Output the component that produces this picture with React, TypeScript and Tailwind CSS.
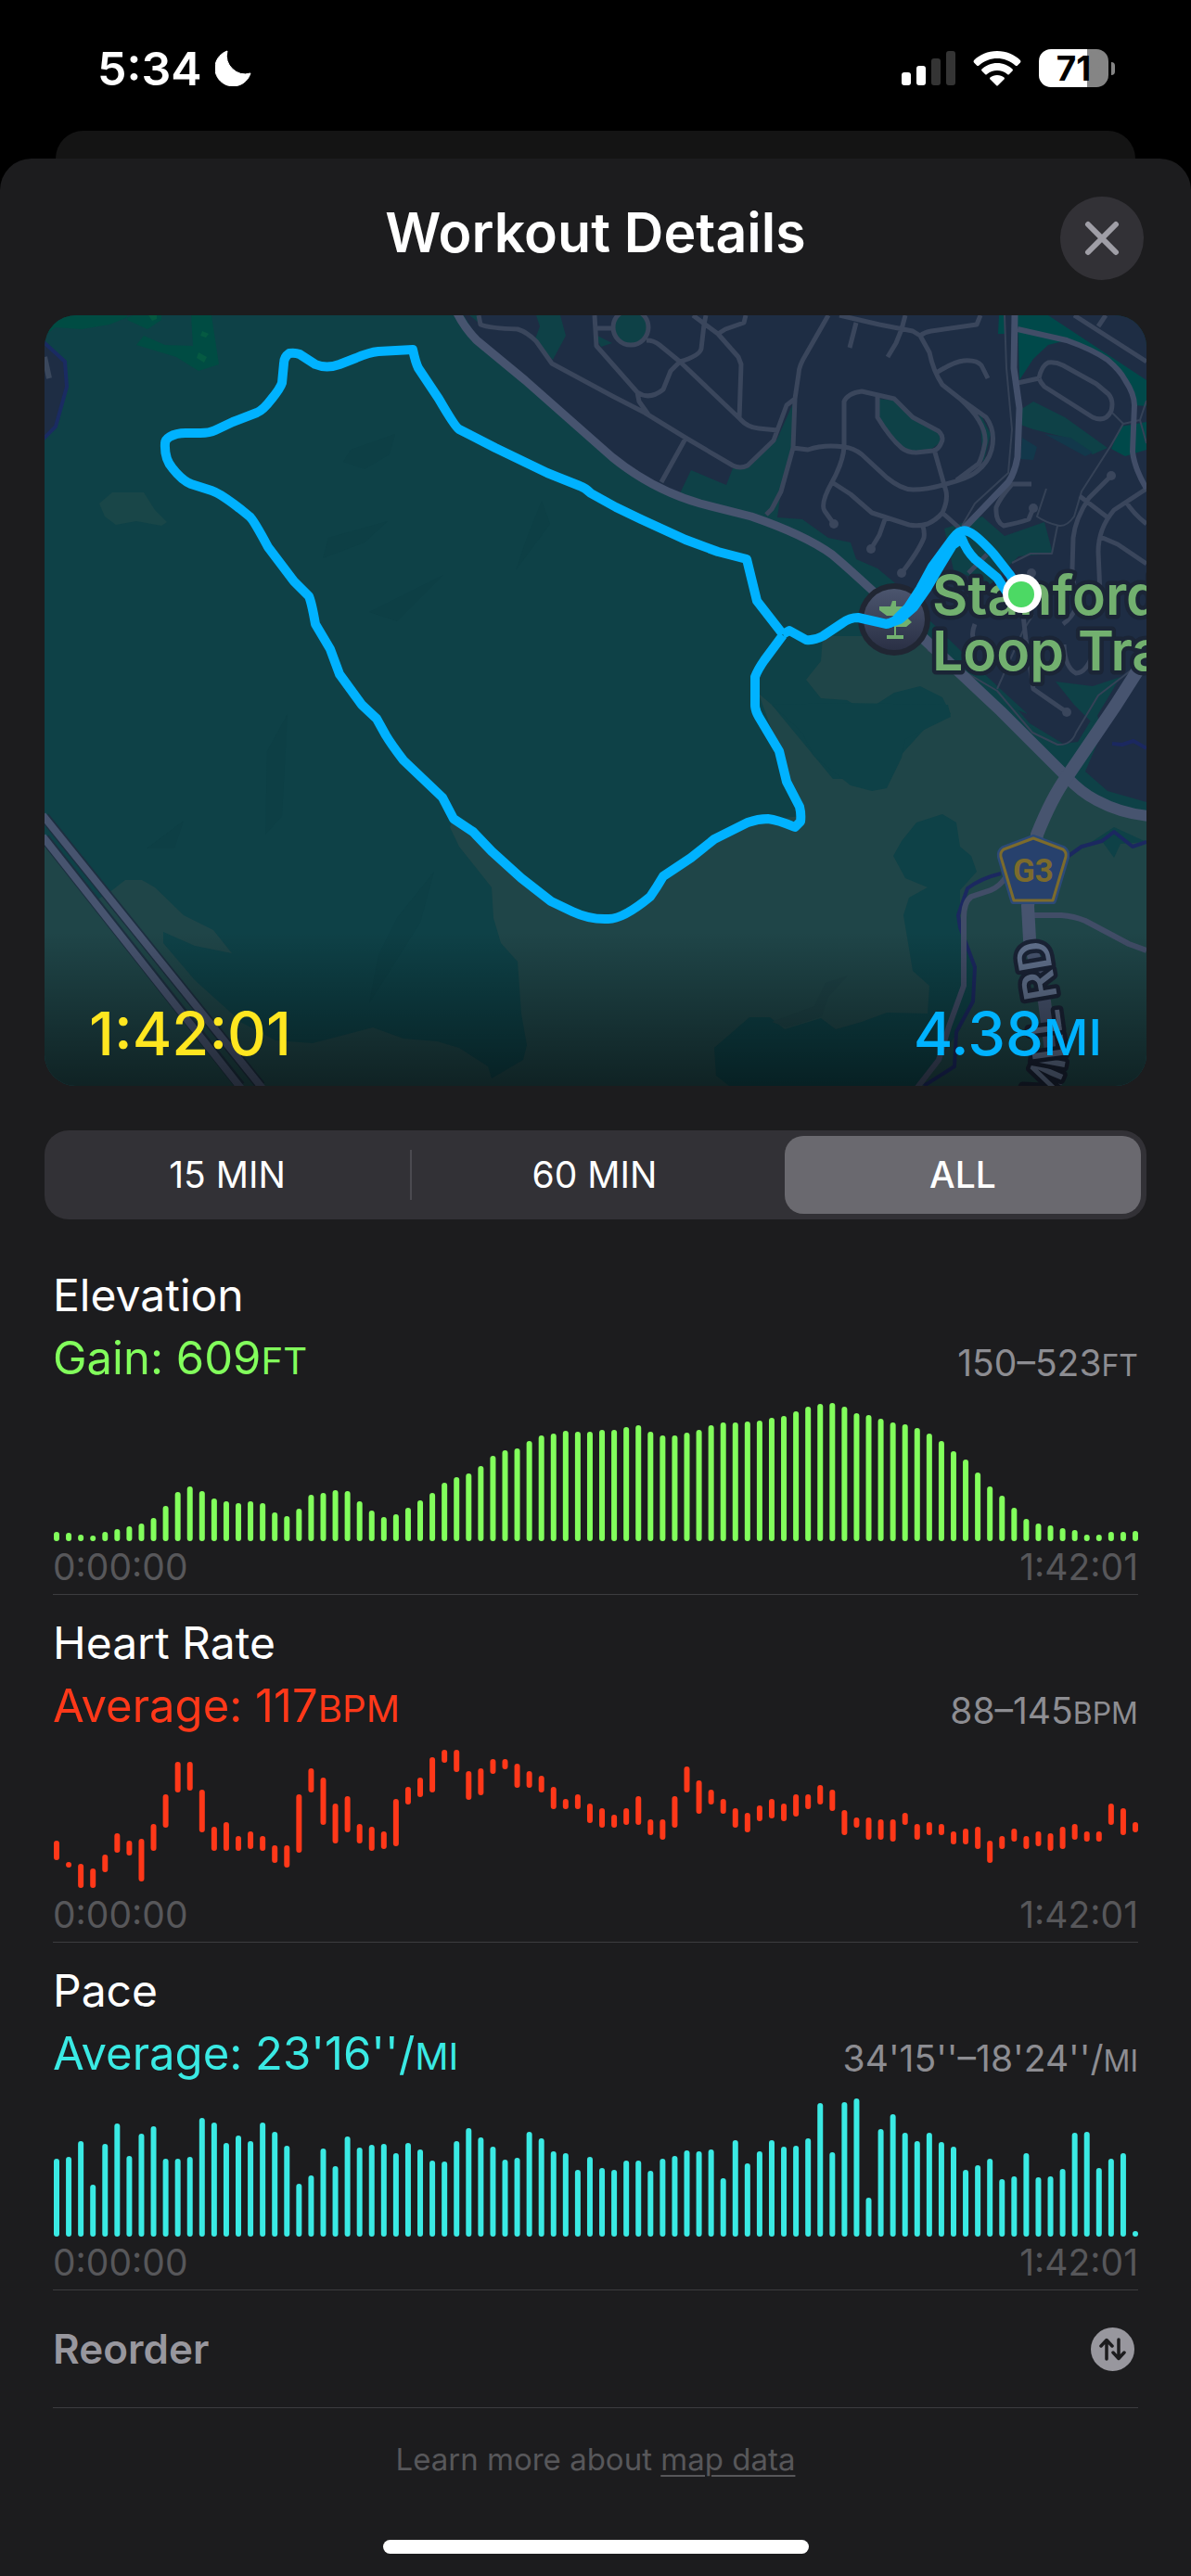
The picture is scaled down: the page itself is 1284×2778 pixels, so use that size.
import { useState } from "react";
import type { ReactNode } from "react";

type Bar = [top: number, bottom: number];

const CHART_HEIGHT = 150;

const fromBase = (heights: number[]): Bar[] =>
  heights.map((h) => [CHART_HEIGHT - h, CHART_HEIGHT]);

const ELEVATION = fromBase([
  10, 9, 7, 6, 10, 13, 16, 19, 25, 38, 53, 59, 54, 46, 43, 41, 43, 41, 31, 27,
  35, 50, 52, 55, 54, 43, 33, 26, 29, 36, 44, 52, 63, 69, 73, 81, 92, 98, 100,
  108, 114, 116, 119, 118, 118, 120, 120, 123, 125, 118, 114, 114, 117, 120,
  125, 128, 128, 129, 130, 133, 135, 140, 145, 148, 149, 145, 138, 136, 132,
  128, 126, 122, 116, 108, 97, 88, 74, 59, 49, 36, 24, 19, 17, 14, 12, 7, 7,
  10, 10, 11,
]);

const HEART_RATE: Bar[] = [
  [98, 119], [121, 127], [123, 149], [128, 149], [113, 132], [90, 111],
  [98, 114], [96, 142], [80, 109], [48, 84], [13, 46], [13, 44], [43, 89],
  [83, 109], [78, 109], [93, 109], [88, 107], [93, 109], [103, 122],
  [103, 127], [48, 111], [20, 46], [30, 81], [58, 101], [50, 89], [80, 101],
  [83, 109], [88, 107], [53, 104], [40, 59], [30, 51], [8, 46], [0, 14],
  [0, 24], [23, 54], [20, 49], [10, 26], [10, 21], [15, 41], [23, 41],
  [28, 46], [40, 64], [53, 64], [48, 64], [58, 79], [63, 84], [70, 84],
  [63, 81], [50, 81], [75, 92], [75, 97], [50, 84], [18, 46], [33, 69],
  [43, 59], [53, 69], [63, 84], [68, 89], [60, 77], [53, 74], [58, 77],
  [48, 72], [48, 64], [38, 59], [43, 66], [65, 92], [73, 84], [73, 97],
  [75, 97], [75, 99], [68, 81], [80, 97], [78, 92], [80, 92], [88, 102],
  [85, 102], [83, 107], [98, 122], [93, 107], [85, 99], [93, 107], [88, 104],
  [90, 109], [83, 107], [80, 97], [88, 99], [88, 99], [58, 81], [63, 92],
  [78, 89],
];

const PACE = fromBase([
  84, 86, 103, 56, 100, 122, 87, 111, 119, 84, 84, 86, 128, 123, 101, 109,
  103, 123, 113, 98, 57, 66, 95, 76, 108, 96, 99, 100, 90, 101, 94, 82, 81,
  103, 117, 107, 97, 83, 85, 113, 106, 92, 90, 72, 86, 74, 72, 82, 82, 71, 84,
  87, 93, 92, 94, 63, 104, 79, 92, 104, 97, 98, 106, 144, 91, 145, 149, 42,
  116, 132, 112, 103, 112, 102, 97, 72, 77, 84, 62, 65, 90, 64, 65, 73, 112,
  113, 74, 84, 90, 6,
]);

function StatusBar() {
  return (
    <div className="flex h-[141px] items-center justify-between pr-[82px] pl-[105px] pt-[6px]">
      <div className="flex items-center gap-[14px]">
        <span className="text-[50px] leading-[60px] font-semibold">5:34</span>
        <svg viewBox="0 0 39 39" className="size-[39px]" aria-label="Do not disturb">
          <path
            d="M13 1 A20 20 0 0 0 38 25 A19.500 19.500 0 1 1 13 1 Z"
            fill="#fff"
            stroke="#fff"
            strokeLinejoin="round"
          />
        </svg>
      </div>
      <div className="flex items-center gap-[19px]">
        <svg viewBox="0 0 58 38" className="h-[38px] w-[58px]" aria-label="Signal">
          <rect x="0" y="23" width="10" height="14" rx="3" fill="#fff" />
          <rect x="16" y="16" width="10" height="21" rx="3" fill="#fff" />
          <rect x="32" y="8" width="10" height="29" rx="3" fill="#343434" />
          <rect x="48" y="0" width="10" height="37" rx="3" fill="#343434" />
        </svg>
        <svg viewBox="0 0 52 38" className="h-[38px] w-[52px]" aria-label="Wi-Fi">
          <path
            d="M26 0 C36 0 45 4 51 10 Q52 11 51 12.500 L48 15.500 Q47 16.500 45.500 15.500 C40 10.500 33 8 26 8 C19 8 12 10.500 6.500 15.500 Q5 16.500 4 15.500 L1 12.500 Q0 11 1 10 C7 4 16 0 26 0 Z"
            fill="#fff"
          />
          <path
            d="M26 13 C32.500 13 38 15.500 42.500 19.500 Q43.500 20.500 42.500 21.500 L39 25 Q38 26 37 25 C34 22.500 30 21 26 21 C22 21 18 22.500 15 25 Q14 26 13 25 L9.500 21.500 Q8.500 20.500 9.500 19.500 C14 15.500 19.500 13 26 13 Z"
            fill="#fff"
          />
          <path
            d="M26 26 C29 26 31.500 27 33.500 28.500 Q34.500 29.500 33.500 30.500 L27 37 Q26 38 25 37 L18.500 30.500 Q17.500 29.500 18.500 28.500 C20.500 27 23 26 26 26 Z"
            fill="#fff"
          />
        </svg>
        <div className="flex items-center gap-[3px]">
          <div className="flex h-[41px] w-[75px] items-center justify-center rounded-[13px] bg-linear-to-r from-white from-70% to-[#858585] to-70% text-[37px] leading-[41px] font-bold text-black">
            71
          </div>
          <div className="h-[14px] w-[4px] rounded-r-full bg-[#858585]" />
        </div>
      </div>
    </div>
  );
}

const ROUTE_LOOP =
  "M796 344 L768 308 L757 263 L726 255 L691 242 L643 220 L616 207 L589 192 Q583 186 577 184 L542 170 L486 143 L447 123 Q443 121 425 90 L403 57 Q400 51 397 37 L360 39 Q350 40 336 46 L318 53 Q304 58 292 53 L275 42 Q270 40 264 41 Q258 45 258 52 L256 73 Q254 79 245 90 Q236 102 229 105 L203 115 L184 124 Q178 127 168 127 L152 127 Q142 127 135 131 Q130 134 130 138 Q129 155 138 165 Q148 178 158 182 L180 189 Q192 193 221 217 Q225 220 241 250 L269 287 L285 303 Q288 310 292 333 L308 360 L318 387 L342 420 L358 435 L368 453 Q374 463 387 480 L429 520 L441 543 L462 557 L482 578 L514 607 L546 632 L569 643 Q588 652 608 651 Q624 651 653 627 Q660 617 667 605 L697 585 L722 565 L758 547 Q769 543 780 543 Q790 544 809 552 L815 546 Q816 538 814 530 L800 503 L792 470 L770 433 Q766 426 766 420 L766 390 Q769 382 776 372 L796 345";

const ROUTE_SPUR =
  "M796 344 L803 340 L821 350 Q830 351 839 346 L860 332 Q868 326 877 326 L908 333 Q916 331 920 326 L931 315 L944 295 L957 271 L979 241 Q987 230 995 233 Q1003 235 1023 257 L1041 280 L1053 300";

const ROUTE_RETURN =
  "M908 333 L922 328 L937 315 L951 295 L965 271 L979 248 L989 241 Q994 254 1003 263 L1027 283 L1041 304";

const STREETS =
  "M468 0 L470 10 Q480 14 510 15 Q520 18 530 28 L547 52 L612 87 L647 105 L691 132 L742 162 Q750 166 758 162 L786 135 L800 97 L809 90 M593 0 L595 33 L639 83 Q652 92 667 80 L675 60 L685 50 Q706 44 708 36 L711 10 L713 0 M596 14 L612 14 M649 27 Q657 27 663 32 L685 50 L750 112 Q758 121 770 122 L790 124 M699 0 L726 20 L748 45 L751 53 L749 112 M726 20 L734 15 L754 8 L756 0 M639 83 L641 93 L651 107 M845 0 L821 42 Q813 55 813 63 L809 90 L807 143 L794 190 L784 209 L778 215 M691 133 L665 180 M807 143 L823 145 Q840 139 862 142 Q872 143 881 150 L908 175 Q924 188 936 188 Q952 188 972 182 Q995 176 1003 170 Q1017 160 1021 145 Q1026 125 1015 110 L987 90 L968 75 Q958 60 954 40 L944 22 L936 17 L900 10 L857 0 M987 90 Q1002 104 1007 113 Q1015 126 1014 137 Q1011 153 1007 160 L983 178 M875 8 L868 35 M928 0 L924 15 L918 30 L909 45 M944 22 Q949 18 956 17 L1005 10 L1009 0 M960 63 Q980 50 991 49 Q1005 48 1010 54 L1017 68 M862 142 L862 93 Q866 84 881 82 L916 90 L936 110 L964 125 Q970 131 967 137 Q964 145 958 146 L940 148 Q930 148 924 143 Q912 133 898 110 L898 88 M862 142 Q861 158 849 180 Q836 203 841 211 L851 225 M849 180 L869 193 L892 213 L932 226 Q942 228 952 225 Q961 221 968 213 Q974 200 972 190 L960 148 M906 220 L900 237 L891 252 M947 227 Q949 235 948 240 Q942 255 924 278 M968 213 L987 230 M1110 0 L1188 50 M1144 0 L1136 12 M1072 68 Q1075 54 1082 51 Q1090 50 1098 54 L1134 74 L1147 85 Q1153 92 1150 103 Q1144 116 1130 110 L1078 77 Q1074 73 1072 68 M1049 73 L1072 68 M1150 173 L1126 197 Q1111 220 1109 240 L1108 273 L1112 315 Q1108 326 1098 333 M1188 187 L1153 210 Q1136 230 1136 255 L1138 300 M1136 238 L1157 247 L1188 268 M1165 200 Q1174 214 1188 225 M1116 195 L1146 218 M1064 182 L1043 182 Q1030 197 1026 207 Q1025 223 1034 227 Q1050 224 1061 220 L1066 208 M1055 323 L1058 350 L1066 403 L1102 428 M1099 355 Q1100 380 1112 386 Q1124 386 1132 360 M1003 333 Q998 345 1003 353 M996 278 L1016 258";

const FOOTPATHS =
  "M1035 0 L1037 57 L1043 123 L1039 170 L1003 203 L989 227 M1188 92 L1181 113 L1163 117 L1150 140 L1118 190 L1110 217 Q1102 228 1094 227 Q1080 224 1070 217 L1080 187 M1151 105 L1163 117 M1181 113 L1188 138 M1092 227 L1086 257 L1063 257 L1043 267 M952 361 L1027 405 L1065 450 L1092 463 Q1107 464 1112 450 L1136 410 L1188 370 M1027 403 L1055 340 L1066 323";

function RouteMap() {
  return (
    <svg
      viewBox="0 0 1188 831"
      preserveAspectRatio="xMidYMid slice"
      className="block h-auto w-full"
      role="img"
      aria-label="Workout route map"
    >
      <defs>
        <linearGradient id="fade" x1="0" y1="0" x2="0" y2="1">
          <stop offset="0" stopColor="#000" stopOpacity="0" />
          <stop offset="1" stopColor="#000" stopOpacity="0.5" />
        </linearGradient>
        <linearGradient id="pin" x1="0" y1="0" x2="0" y2="1">
          <stop offset="0" stopColor="#4b556e" />
          <stop offset="1" stopColor="#2a3045" />
        </linearGradient>
        <path id="mill-road" d="M1040 920 Q1098 840 1101 800 L1092 735 L1081 672" />
      </defs>

      <rect width="1188" height="831" fill="#0e4147" />

      {/* Open hillsides */}
      <path
        fill="#1f4548"
        d="M839 346 L837 373 L821 393 L837 413 L865 415 L885 427 L916 407 L944 400 L968 412 L977 430 L948 447 L900 500 L850 500 L784 420 L770 408 L792 470 L814 540 L758 547 L697 585 L653 627 L608 651 L546 632 L441 543 L437 552 L447 573 L482 617 L484 650 L492 677 L510 697 L514 753 L520 787 L516 803 L482 823 L478 810 L447 790 L423 783 L387 780 L354 768 L289 785 L249 782 L213 763 L162 717 L128 677 L128 665 L162 680 L202 688 L182 663 L150 647 L119 617 L105 609 L87 609 L73 620 L57 630 L0 567 L0 831 L1188 831 L1188 540 L1134 523 L1102 498 L1023 420 L952 353 L905 346 Z"
      />
      <path
        fill="#194648"
        d="M73 191 L107 191 L119 210 L132 223 L126 227 L99 222 L77 226 L65 217 L59 203 Z"
      />
      <path
        fill="#0e4147"
        d="M784 420 L817 450 L829 475 L869 507 L892 513 L908 510 L924 477 L928 457 L948 447 L977 433 L974 420 L860 418 Z M968 538 L940 547 L924 567 L915 583 L928 607 L952 617 L932 628 L926 647 L936 707 L954 723 L952 753 L908 752 L881 762 L853 770 L837 758 L798 770 L782 757 L760 757 L722 790 L724 820 L738 831 L944 831 L987 770 L1001 737 L1001 703 L987 653 L987 620 L1005 600 L999 583 L987 573 L983 547 Z M1000 392 L1062 440 L1110 505 L1146 530 L1188 540 L1188 400 L1010 380 Z M1118 575 L1140 567 L1153 585 L1160 570 L1188 568 L1153 552 Z"
      />
      <path
        fill="#1d4246"
        d="M784 762 L830 745 L842 720 L866 712 L845 735 L838 756 L800 768 Z"
      />
      <path
        fill="#0d3f45"
        d="M330 145 L378 128 L372 150 L345 166 L322 158 Z M306 240 L370 222 L345 245 L300 262 Z M520 240 L536 200 L545 225 L508 275 Z M110 575 L150 545 L140 575 Z M240 470 L262 430 L256 540 L238 560 Z M380 650 L420 600 L405 655 L350 742 L360 690 Z M350 320 L430 280 L380 330 Z"
      />

      {/* Golf course and parks */}
      <path
        fill="#004c43"
        d="M0 0 H95 L70 10 L40 15 L12 13 L0 22 Z M89 5 L111 15 L126 5 V0 H89 Z M158 0 H180 L188 53 L166 60 L142 45 L99 32 L107 22 L130 32 L160 33 Z"
      />
      <path fill="#055a42" d="M112 0 h9 v4 l-5 2 Z M170 17 l7 3 l-3 4 l-6 -2 Z M166 40 l9 5 l-3 6 l-8 -5 Z" />

      {/* Neighbourhoods */}
      <path
        fill="#1e2d44"
        d="M452 0 L470 30 L520 72 L592 135 L632 170 L671 190 L685 192 L697 167 L735 183 L742 165 L758 165 L790 133 L807 95 L807 143 L794 190 L790 218 L817 220 L845 240 L869 245 L875 263 L898 273 L916 288 L950 325 L1027 400 L1062 440 L1098 462 L1114 460 L1134 427 L1140 450 L1122 492 L1146 513 L1188 525 L1188 0 Z"
      />
      <path fill="#1e2d44" stroke="#1a2b62" strokeWidth="4" d="M-4 26 L22 50 L24 77 L12 120 L-4 136 Z" />
      <path fill="none" stroke="#3a475c" strokeWidth="6" d="M0 45 L5 68" />
      <path
        fill="#0e4147"
        d="M458 0 H468 V8 Z M530 0 H556 L562 22 L548 48 L528 28 L534 12 Z M592 20 L612 30 L600 34 Z M898 90 L918 92 L936 110 L964 125 L966 137 L955 145 L932 147 L915 135 L898 110 Z M1066 93 L1100 110 L1146 143 L1130 150 L1106 133 L1066 123 L1052 118 L1052 102 Z M970 230 L1011 217 L1035 238 L1078 223 L1087 257 L1050 260 L1020 290 L980 275 Z M955 330 L1000 375 L1060 430 L1010 410 Z M1090 395 L1130 400 L1160 390 L1130 440 L1110 420 Z M1008 105 L1020 128 L1012 160 Z"
      />
      <path fill="#12384b" d="M1054 132 L1070 142 L1066 156 L1052 155 Z M1078 128 L1106 132 L1130 148 L1122 152 Z" />
      <circle cx="632" cy="13" r="18" fill="#0e4147" />
      <path
        fill="#00494a"
        d="M1049 0 H1082 L1188 70 V98 L1175 97 L1165 70 L1146 48 L1102 27 L1082 32 L1066 47 L1051 70 Z M1029 0 H1036 V20 H1028 Z M1160 120 L1188 115 V145 L1165 152 L1150 144 Z"
      />

      {/* Streams */}
      <path
        fill="none"
        stroke="#1b2860"
        strokeWidth="4"
        strokeLinejoin="round"
        d="M1031 602 Q1010 607 995 618 L985 647 L987 660 L1003 703 L1001 740 L983 773 L981 810 L948 831 M1104 583 L1118 573 L1140 567 L1153 557 L1173 573 L1188 568 M1151 462 L1162 463 L1174 459 L1188 467"
      />

      {/* Roads */}
      <g fill="none" strokeLinejoin="round">
        <path d={FOOTPATHS} stroke="#354257" strokeWidth="2" />
        <path d={STREETS} stroke="#3a465c" strokeWidth="5" />
        <circle cx="632" cy="13" r="19" stroke="#3a465c" strokeWidth="5" />
        <g fill="#3a465c">
          <circle cx="851" cy="225" r="5" />
          <circle cx="891" cy="252" r="5" />
          <circle cx="924" cy="278" r="5" />
          <circle cx="1150" cy="173" r="5" />
          <circle cx="1066" cy="208" r="5" />
          <circle cx="1102" cy="428" r="5" />
          <circle cx="1064" cy="278" r="5" />
        </g>
        <path
          stroke="#414d67"
          strokeWidth="6"
          d="M1037 605 Q1030 616 1020 620 L999 627 Q991 633 991 650 L991 723 L975 767 L964 803 L940 834 M1066 647 L1096 647 Q1110 648 1122 653 L1169 678 L1188 685 M1049 15 L1102 27 Q1130 37 1146 48 Q1160 60 1165 70 Q1175 85 1175 97 L1173 147 Q1175 165 1188 187"
        />
        <path stroke="#43506b" strokeWidth="7" d="M1046 0 L1045 57 L1051 100 L1049 153 Q1046 170 1039 180 L991 230" />
        <g stroke="#1d2f40" strokeWidth="11">
          <path d="M0 541 L233 831 M0 564 L211 831" />
        </g>
        <g stroke="#47546f">
          <path strokeWidth="8" d="M-2 539 L236 835 M-2 562 L213 835" />
          <path
            strokeWidth="9"
            d="M444 -4 Q453 14 466 27 L518 70 L612 153 Q655 188 707 203 L762 217 Q820 237 849 258 Q880 284 952 353"
          />
          <path strokeWidth="12" d="M945 346 L1031 427 L1059 455 L1102 498 Q1118 515 1134 523 Q1160 537 1190 540" />
          <path strokeWidth="14" d="M1192 362 L1155 420 L1102 498 Q1086 520 1070 560 L1060 637 L1062 673 L1078 740 L1090 831" />
        </g>
      </g>

      {/* Road labels */}
      <path
        d="M1066 564 L1098 576 Q1102 579 1101 584 L1087 631 H1045 L1031 584 Q1030 579 1034 576 Z"
        fill="#27416d"
        stroke="#2c4a78"
        strokeWidth="8"
        strokeLinejoin="round"
      />
      <path
        d="M1066 564 L1098 576 Q1102 579 1101 584 L1087 631 H1045 L1031 584 Q1030 579 1034 576 Z"
        fill="#27416d"
        stroke="#7c6b2c"
        strokeWidth="3"
        strokeLinejoin="round"
      />
      <text x="1066" y="611" textAnchor="middle" className="fill-[#7c6b2c] font-['Roboto',sans-serif] text-[35px] font-bold">
        G3
      </text>
      <text
        textAnchor="end"
        className="fill-[#61718d] stroke-[#1a2336] stroke-[9px] font-['Roboto',sans-serif] text-[50px] font-medium [paint-order:stroke] [stroke-linejoin:round]"
      >
        <textPath href="#mill-road" startOffset="100%">
          MILL RD
        </textPath>
      </text>

      {/* Trailhead pin */}
      <circle cx="916" cy="328" r="39" fill="#202633" />
      <circle cx="916" cy="328" r="33" fill="url(#pin)" />
      <path
        fill="#72b06f"
        d="M914 308 h4 v6 h12 v10 h-12 v2 h12 l5 5 l-6 5 h-11 v9 h8 v4 h-18 v-4 h8 v-21 h-8 l-8 -6 v-4 h12 Z"
      />
      <text className="fill-[#72b06f] stroke-[#1b2536] stroke-[9px] text-[59px] font-semibold [paint-order:stroke] [stroke-linejoin:round]">
        <tspan x="957" y="323">Stanford</tspan>
        <tspan x="957" y="383">Loop Trail</tspan>
      </text>

      {/* Recorded route */}
      <g fill="none" stroke="#00b2ff" strokeWidth="10" strokeLinejoin="round">
        <path d={ROUTE_LOOP} />
        <path d={ROUTE_SPUR} />
        <path d={ROUTE_RETURN} />
      </g>
      <circle cx="1054" cy="300" r="21" fill="#fff" />
      <circle cx="1053" cy="301" r="14" fill="#4cd964" />

      <rect y="665" width="1188" height="166" fill="url(#fade)" />
    </svg>
  );
}

function Unit({ children }: { children: ReactNode }) {
  return <span className="text-[0.82em]">{children}</span>;
}

function RangeControl() {
  const [active, setActive] = useState("ALL");
  const options = ["15 MIN", "60 MIN", "ALL"];
  return (
    <div className="mx-12 mt-12 grid h-24 grid-cols-[394fr_404fr_384fr] items-center rounded-[26px] bg-[#323136] py-[6px] pr-[6px]">
      {options.map((option, i) => (
        <div
          key={option}
          className={i === 1 ? "flex h-full items-center pr-[8px]" : "flex h-full items-center"}
        >
          {i === 1 && <div className="h-[54px] w-[2px] bg-[#4b4a50]" />}
          <button
            type="button"
            aria-pressed={active === option}
            onClick={() => setActive(option)}
            className="h-full flex-1 rounded-[20px] text-[39px] leading-[48px] aria-pressed:bg-[#6a696f] aria-pressed:font-medium"
          >
            {option}
          </button>
        </div>
      ))}
    </div>
  );
}

interface MetricProps {
  title: string;
  summary: ReactNode;
  range: ReactNode;
  bars: Bar[];
  tone: string;
}

function Metric({ title, summary, range, bars, tone }: MetricProps) {
  const step = 1163 / (bars.length - 1);
  return (
    <section className={`border-b border-[#3c3c3f] pt-[18px] pb-[7px] ${tone}`}>
      <h2 className="text-[48px] leading-[68px] text-white">{title}</h2>
      <div className="mt-[3px] flex h-[68px] items-end justify-between">
        <p className="text-[49px] leading-[68px]">{summary}</p>
        <p className="text-[39px] leading-[58px] text-[#8d8d92]">{range}</p>
      </div>
      <svg
        viewBox={`0 0 1170 ${CHART_HEIGHT}`}
        className="mt-[10px] block h-auto w-full"
        role="img"
        aria-label={`${title} chart`}
      >
        {bars.map(([top, bottom], i) => (
          <rect
            key={i}
            x={i * step + 1}
            y={top}
            width="6"
            height={bottom - top}
            rx="3"
            fill="currentColor"
          />
        ))}
      </svg>
      <div className="mt-[5px] flex justify-between text-[39px] leading-[45px] text-[#57575a]">
        <span>0:00:00</span>
        <span>1:42:01</span>
      </div>
    </section>
  );
}

export default function App() {
  return (
    <div className="flex min-h-screen flex-col bg-black font-['Inter',sans-serif] text-white">
      <StatusBar />
      <div className="mx-[60px] h-[30px] rounded-t-[30px] bg-[#141414]" />
      <main className="flex flex-1 flex-col rounded-t-[34px] bg-[#1c1c1e]">
        <header className="grid grid-cols-[90px_1fr_90px] items-start px-[51px] pt-[41px]">
          <h1 className="col-start-2 text-center text-[59px] leading-[78px] font-semibold">
            Workout Details
          </h1>
          <button
            type="button"
            aria-label="Close"
            className="flex size-[90px] items-center justify-center rounded-full bg-[#323136]"
          >
            <svg viewBox="0 0 38 38" className="size-[38px]">
              <path d="M4 4 L34 34 M34 4 L4 34" stroke="#9f9ea6" strokeWidth="6" strokeLinecap="round" />
            </svg>
          </button>
        </header>

        <div className="relative mx-12 mt-[38px] overflow-hidden rounded-[34px]">
          <RouteMap />
          <div className="absolute inset-x-0 bottom-0 flex items-baseline justify-between px-[48px] pb-[12px] text-[65px] leading-[80px] font-medium">
            <span className="text-[#ffe620]">1:42:01</span>
            <span className="text-[#00b2ff]">
              4.38<Unit>MI</Unit>
            </span>
          </div>
        </div>

        <RangeControl />

        <div className="mx-[57px] mt-[30px]">
          <Metric
            title="Elevation"
            tone="text-[#82ff5c]"
            summary={<>Gain: 609<Unit>FT</Unit></>}
            range={<>150–523<Unit>FT</Unit></>}
            bars={ELEVATION}
          />
          <Metric
            title="Heart Rate"
            tone="text-[#ff3819]"
            summary={<>Average: 117<Unit>BPM</Unit></>}
            range={<>88–145<Unit>BPM</Unit></>}
            bars={HEART_RATE}
          />
          <Metric
            title="Pace"
            tone="text-[#3aeae4]"
            summary={<>Average: 23&apos;16&apos;&apos;/<Unit>MI</Unit></>}
            range={<>34&apos;15&apos;&apos;–18&apos;24&apos;&apos;/<Unit>MI</Unit></>}
            bars={PACE}
          />
          <button
            type="button"
            className="flex h-[127px] w-full items-center justify-between border-b border-[#3c3c3f] pr-[4px] text-[44px] leading-[54px] font-semibold text-[#98979e]"
          >
            Reorder
            <svg viewBox="0 0 47 47" className="size-[47px]" aria-hidden="true">
              <circle cx="23.500" cy="23.500" r="23.500" fill="#98979e" />
              <path
                d="M17 34 V14 M11 20 L17 13.500 L23 20 M30 13 V33 M24 27 L30 33.500 L36 27"
                fill="none"
                stroke="#1c1c1e"
                strokeWidth="3.500"
                strokeLinecap="round"
                strokeLinejoin="round"
              />
            </svg>
          </button>
          <p className="mt-[31px] text-center text-[33px] leading-[48px] text-[#57575a]">
            Learn more about{" "}
            <a href="#map-data" className="underline decoration-2 underline-offset-[5px]">
              map data
            </a>
          </p>
        </div>

        <div className="mx-auto mt-auto mb-6 h-[15px] w-[459px] rounded-full bg-white" />
      </main>
    </div>
  );
}
